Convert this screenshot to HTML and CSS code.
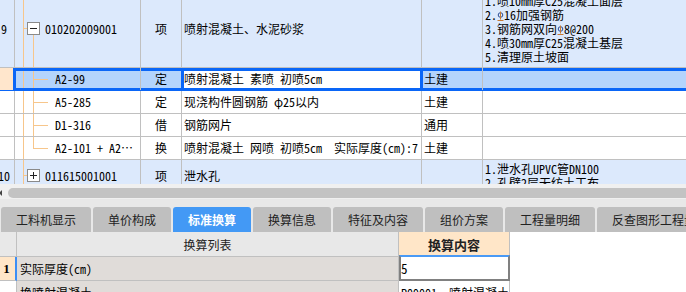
FILE: index.html
```html
<!DOCTYPE html>
<html lang="zh-CN">
<head>
  <meta charset="UTF-8">
  <title>分部分项 - 标准换算</title>
  <link rel="stylesheet" href="styles.css">
</head>
<body>
  <div class="bill-grid">
    <div class="bill-rows">
      <div class="row group r9">
        <div class="c num">9</div>
        <div class="c code"><span class="toggle"></span>010202009001</div>
        <div class="c type">项</div>
        <div class="c name">喷射混凝土、水泥砂浆</div>
        <div class="c spec"></div>
        <div class="c feat">
          <span>1.喷10mm厚C25混凝土面层</span>
          <span>2.<svg class="rebar" viewBox="0 0 7 10"><circle cx="3.5" cy="4" r="2.3"/><path d="M3.5 0.5V8.5M0.5 9.5H6.5"/></svg>16加强钢筋</span>
          <span>3.钢筋网双向<svg class="rebar" viewBox="0 0 7 10"><circle cx="3.5" cy="4" r="2.3"/><path d="M3.5 0.5V8.5M0.5 9.5H6.5"/></svg>8@200</span>
          <span>4.喷30mm厚C25混凝土基层</span>
          <span>5.清理原土坡面</span>
        </div>
      </div>
      <div class="row leaf sel">
        <div class="c num"></div>
        <div class="c code">A2-99</div>
        <div class="c type">定</div>
        <div class="c name">喷射混凝土 素喷 初喷5cm</div>
        <div class="c spec">土建</div>
        <div class="c feat"></div>
      </div>
      <div class="row leaf">
        <div class="c num"></div>
        <div class="c code">A5-285</div>
        <div class="c type">定</div>
        <div class="c name">现浇构件圆钢筋 φ25以内</div>
        <div class="c spec">土建</div>
        <div class="c feat"></div>
      </div>
      <div class="row leaf">
        <div class="c num"></div>
        <div class="c code">D1-316</div>
        <div class="c type">借</div>
        <div class="c name">钢筋网片</div>
        <div class="c spec">通用</div>
        <div class="c feat"></div>
      </div>
      <div class="row leaf last">
        <div class="c num"></div>
        <div class="c code">A2-101 + A2…</div>
        <div class="c type">换</div>
        <div class="c name">喷射混凝土 网喷 初喷5cm  实际厚度(cm):7</div>
        <div class="c spec">土建</div>
        <div class="c feat"></div>
      </div>
      <div class="row group r10">
        <div class="c num">10</div>
        <div class="c code"><span class="toggle plus"></span>011615001001</div>
        <div class="c type">项</div>
        <div class="c name">泄水孔</div>
        <div class="c spec"></div>
        <div class="c feat">
          <span>1.泄水孔UPVC管DN100</span>
          <span>2.孔壁2层无纺土工布</span>
        </div>
      </div>
    </div>
  </div>

  <div class="hscroll">
    <span class="arrow"></span>
    <div class="thumb"></div>
  </div>

  <div class="tabs">
    <div class="tab">工料机显示</div>
    <div class="tab">单价构成</div>
    <div class="tab on">标准换算</div>
    <div class="tab">换算信息</div>
    <div class="tab">特征及内容</div>
    <div class="tab">组价方案</div>
    <div class="tab">工程量明细</div>
    <div class="tab">反查图形工程量</div>
  </div>

  <div class="calc">
    <div class="k h"></div>
    <div class="k h list">换算列表</div>
    <div class="k h val">换算内容</div>

    <div class="k num cur">1</div>
    <div class="k item">实际厚度(cm)</div>
    <div class="k edit">5</div>

    <div class="k num"></div>
    <div class="k item">换喷射混凝土</div>
    <div class="k out">P09001  喷射混凝土</div>
  </div>
</body>
</html>
```

FILE: styles.css
```css
* {
  margin: 0;
  padding: 0;
  box-sizing: border-box;
}

body {
  font-family: "Noto Sans CJK SC", sans-serif;
  font-size: 12px;
  color: #000;
  background: #fff;
  width: 686px;
  height: 292px;
  overflow: hidden;
}

/* top grid: bill items */

.bill-grid {
  height: 184px;
  overflow: hidden;
}

.bill-rows {
  margin-top: -10px;
}

.row {
  display: grid;
  grid-template-columns: 15px 126px 41px 240px 61px 1fr;
  height: 23px;
  border-bottom: 1px solid #c0c0c0;
}

.c {
  display: flex;
  align-items: center;
  border-right: 1px solid #c0c0c0;
  white-space: pre;
  overflow: hidden;
  line-height: 14px;
  font-feature-settings: "hwid" 1;
}

.num {
  justify-content: center;
  padding-right: 6px;
  overflow: visible;
}

.type {
  justify-content: center;
}

.name,
.spec {
  padding-left: 2px;
}

.feat {
  flex-direction: column;
  align-items: flex-start;
  justify-content: center;
  padding-left: 2px;
  border-right: 0;
}

.feat span {
  display: block;
}

.rebar {
  width: 7px;
  height: 10px;
  vertical-align: -1px;
  fill: none;
  stroke: #2b4c94;
  stroke-width: 1;
}

.rebar path {
  stroke: #c77b34;
}

.group {
  background: #dce9fc;
}

.r9 {
  height: 78px;
}

.r10 {
  height: 32px;
}

/* tree lines */

.group .code {
  padding-left: 12px;
  background:
    linear-gradient(#f7c68b, #f7c68b) 8px 0 / 1px 100% no-repeat,
    linear-gradient(#f7c68b, #f7c68b) 8px 50% / 4px 1px no-repeat;
}

.r9 .code {
  background:
    linear-gradient(#f7c68b, #f7c68b) 8px 0 / 1px 100% no-repeat,
    linear-gradient(#f7c68b, #f7c68b) 8px 50% / 4px 1px no-repeat,
    linear-gradient(#f7c68b, #f7c68b) 18px 100% / 1px calc(50% - 6px) no-repeat;
}

.leaf .code {
  padding-left: 40px;
  background:
    linear-gradient(#f7c68b, #f7c68b) 8px 0 / 1px 100% no-repeat,
    linear-gradient(#f7c68b, #f7c68b) 18px 0 / 1px 100% no-repeat,
    linear-gradient(#f7c68b, #f7c68b) 18px 50% / 15px 1px no-repeat;
}

.leaf.last .code {
  background:
    linear-gradient(#f7c68b, #f7c68b) 8px 0 / 1px 100% no-repeat,
    linear-gradient(#f7c68b, #f7c68b) 18px 0 / 1px calc(50% + 1px) no-repeat,
    linear-gradient(#f7c68b, #f7c68b) 18px 50% / 15px 1px no-repeat;
}

.toggle {
  width: 13px;
  height: 13px;
  margin-right: 5px;
  border: 1px solid #8a8a8a;
  background:
    linear-gradient(#222, #222) center / 7px 1px no-repeat,
    #fff;
}

.toggle.plus {
  background:
    linear-gradient(#222, #222) center / 7px 1px no-repeat,
    linear-gradient(#222, #222) center / 1px 7px no-repeat,
    #fff;
}

/* selected row */

.sel {
  border-bottom-color: #0a66f7;
}

.sel .c {
  background-color: #b4d4fc;
  box-shadow: inset 0 3px #0a66f7, inset 0 -2px #0a66f7;
}

.sel .num {
  background-color: #ffe6cc;
  border-right-color: #0a66f7;
  box-shadow: inset -1px 0 #0a66f7;
}

.sel .code {
  background-color: #b4d4fc;
  box-shadow: inset 1px 0 #0a66f7, inset 0 3px #0a66f7, inset 0 -2px #0a66f7;
}

.sel .type {
  border-right-color: #0a66f7;
}

.sel .name {
  background-color: #fff;
  border-right-color: #0a66f7;
  box-shadow: inset 2px 0 #0a66f7, inset -1px 0 #0a66f7, inset 0 3px #0a66f7, inset 0 -2px #0a66f7;
}

.sel .spec {
  box-shadow: inset 1px 0 #0a66f7, inset 0 3px #0a66f7, inset 0 -2px #0a66f7;
}

/* scrollbar */

.hscroll {
  display: flex;
  align-items: center;
  height: 15px;
  padding-top: 4px;
  padding-bottom: 1px;
  background: #f0f0f0;
}

.arrow {
  width: 0;
  height: 0;
  margin-left: -1px;
  border-right: 3px solid #444;
  border-top: 3px solid transparent;
  border-bottom: 3px solid transparent;
}

.thumb {
  flex: 1;
  height: 10px;
  margin-left: 6px;
  margin-right: -10px;
  border-radius: 5px;
  background: #c3c3c3;
}

/* tabs */

.tabs {
  display: flex;
  gap: 2px;
  height: 33px;
  padding: 8px 0 0 1px;
  background: #e8e8e8;
}

.tab {
  display: flex;
  align-items: center;
  padding: 0 15px;
  background: #bfbfbf;
  border-radius: 3px 3px 0 0;
  color: #222;
  white-space: nowrap;
}

.tab.on {
  background: #4399f5;
  color: #fff;
  font-weight: bold;
}

/* bottom grid: conversion list */

.calc {
  display: grid;
  grid-template-columns: 17px 382px 111px;
  grid-auto-rows: 24px;
  grid-template-rows: 25px;
  width: 510px;
}

.k {
  display: flex;
  align-items: center;
  border-right: 1px solid #c0c0c0;
  border-bottom: 1px solid #c0c0c0;
  white-space: pre;
  overflow: hidden;
  font-feature-settings: "hwid" 1;
}

.h {
  background: #e8e8e8;
}

.h.list {
  justify-content: center;
  color: #222;
}

.h.val {
  justify-content: center;
  background: #ffe6c8;
  font-size: 13px;
  font-weight: bold;
  color: #222;
}

.num.cur {
  justify-content: center;
  padding-right: 2px;
  background: #ffe6c8;
  border-right: 2px solid #3d8ef5;
  font-family: "Liberation Serif", serif;
  font-size: 13px;
  font-weight: bold;
}

.item {
  padding-left: 3px;
  background: #e0dcd9;
}

.edit {
  position: relative;
  margin-top: -2px;
  background: #fff;
  border: 2px solid #808080;
  border-top-color: #4a9af5;
  font-size: 13px;
}

.out {
  padding-left: 2px;
}
```
